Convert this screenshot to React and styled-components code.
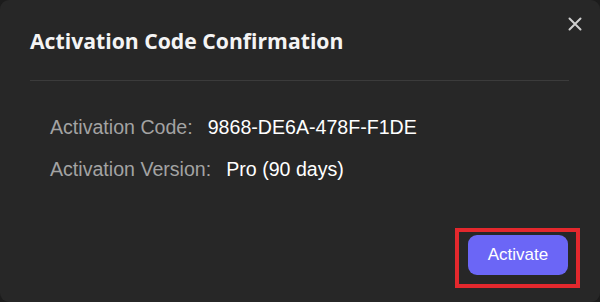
import React from "react";
import styled, { createGlobalStyle } from "styled-components";

const GlobalStyle = createGlobalStyle`
  html, body {
    margin: 0;
    padding: 0;
    background: #1c1c1c;
  }
`;

const Dialog = styled.div`
  position: relative;
  box-sizing: border-box;
  width: 600px;
  height: 302px;
  background: #272727;
  border-radius: 9px;
  display: flex;
  flex-direction: column;
  padding: 0 20px 14px 30px;
  overflow: hidden;
`;

const Title = styled.h1`
  margin: 26px 0 0;
  font-family: "Open Sans", "Noto Sans", sans-serif;
  font-weight: 700;
  font-size: 21.2px;
  line-height: 29px;
  color: #f4f4f4;
`;

const Divider = styled.div`
  height: 1px;
  margin: 25px 11px 0 0;
  background: #3b3b3b;
`;

const CloseButton = styled.button`
  position: absolute;
  top: 15px;
  right: 17px;
  width: 17px;
  height: 17px;
  padding: 0;
  border: none;
  background: transparent;
  display: flex;
  align-items: center;
  justify-content: center;
  cursor: pointer;
`;

const Details = styled.div`
  margin-top: 34px;
  padding-left: 20px;
  display: flex;
  flex-direction: column;
  gap: 18px;
`;

const Row = styled.div`
  display: flex;
  font-family: "Liberation Sans", Arial, sans-serif;
  font-size: 19.6px;
  line-height: 24px;
`;

const Label = styled.span`
  color: #a3a3a3;
`;

const Value = styled.span`
  color: #ffffff;
  margin-left: 15px;
`;

const Footer = styled.div`
  margin-top: auto;
  display: flex;
  justify-content: flex-end;
`;

const Highlight = styled.div`
  border: 4px solid #e3282d;
  padding: 3px 8px 9px 9px;
`;

const ActivateButton = styled.button`
  width: 100px;
  height: 40px;
  border: none;
  border-radius: 9px;
  background: #6b66f6;
  color: #ffffff;
  font-family: "Liberation Sans", Arial, sans-serif;
  font-size: 17px;
  cursor: pointer;
`;

export default function App() {
  return (
    <>
      <GlobalStyle />
      <Dialog>
        <CloseButton aria-label="Close">
          <svg width="14" height="14" viewBox="0 0 14 14">
            <path
              d="M1.5 1.5 L12.5 12.5 M12.5 1.5 L1.5 12.5"
              stroke="#cfcfcf"
              strokeWidth="2"
              strokeLinecap="round"
            />
          </svg>
        </CloseButton>
        <Title>Activation Code Confirmation</Title>
        <Divider />
        <Details>
          <Row>
            <Label>Activation Code:</Label>
            <Value>9868-DE6A-478F-F1DE</Value>
          </Row>
          <Row>
            <Label>Activation Version:</Label>
            <Value>Pro (90 days)</Value>
          </Row>
        </Details>
        <Footer>
          <Highlight>
            <ActivateButton>Activate</ActivateButton>
          </Highlight>
        </Footer>
      </Dialog>
    </>
  );
}
